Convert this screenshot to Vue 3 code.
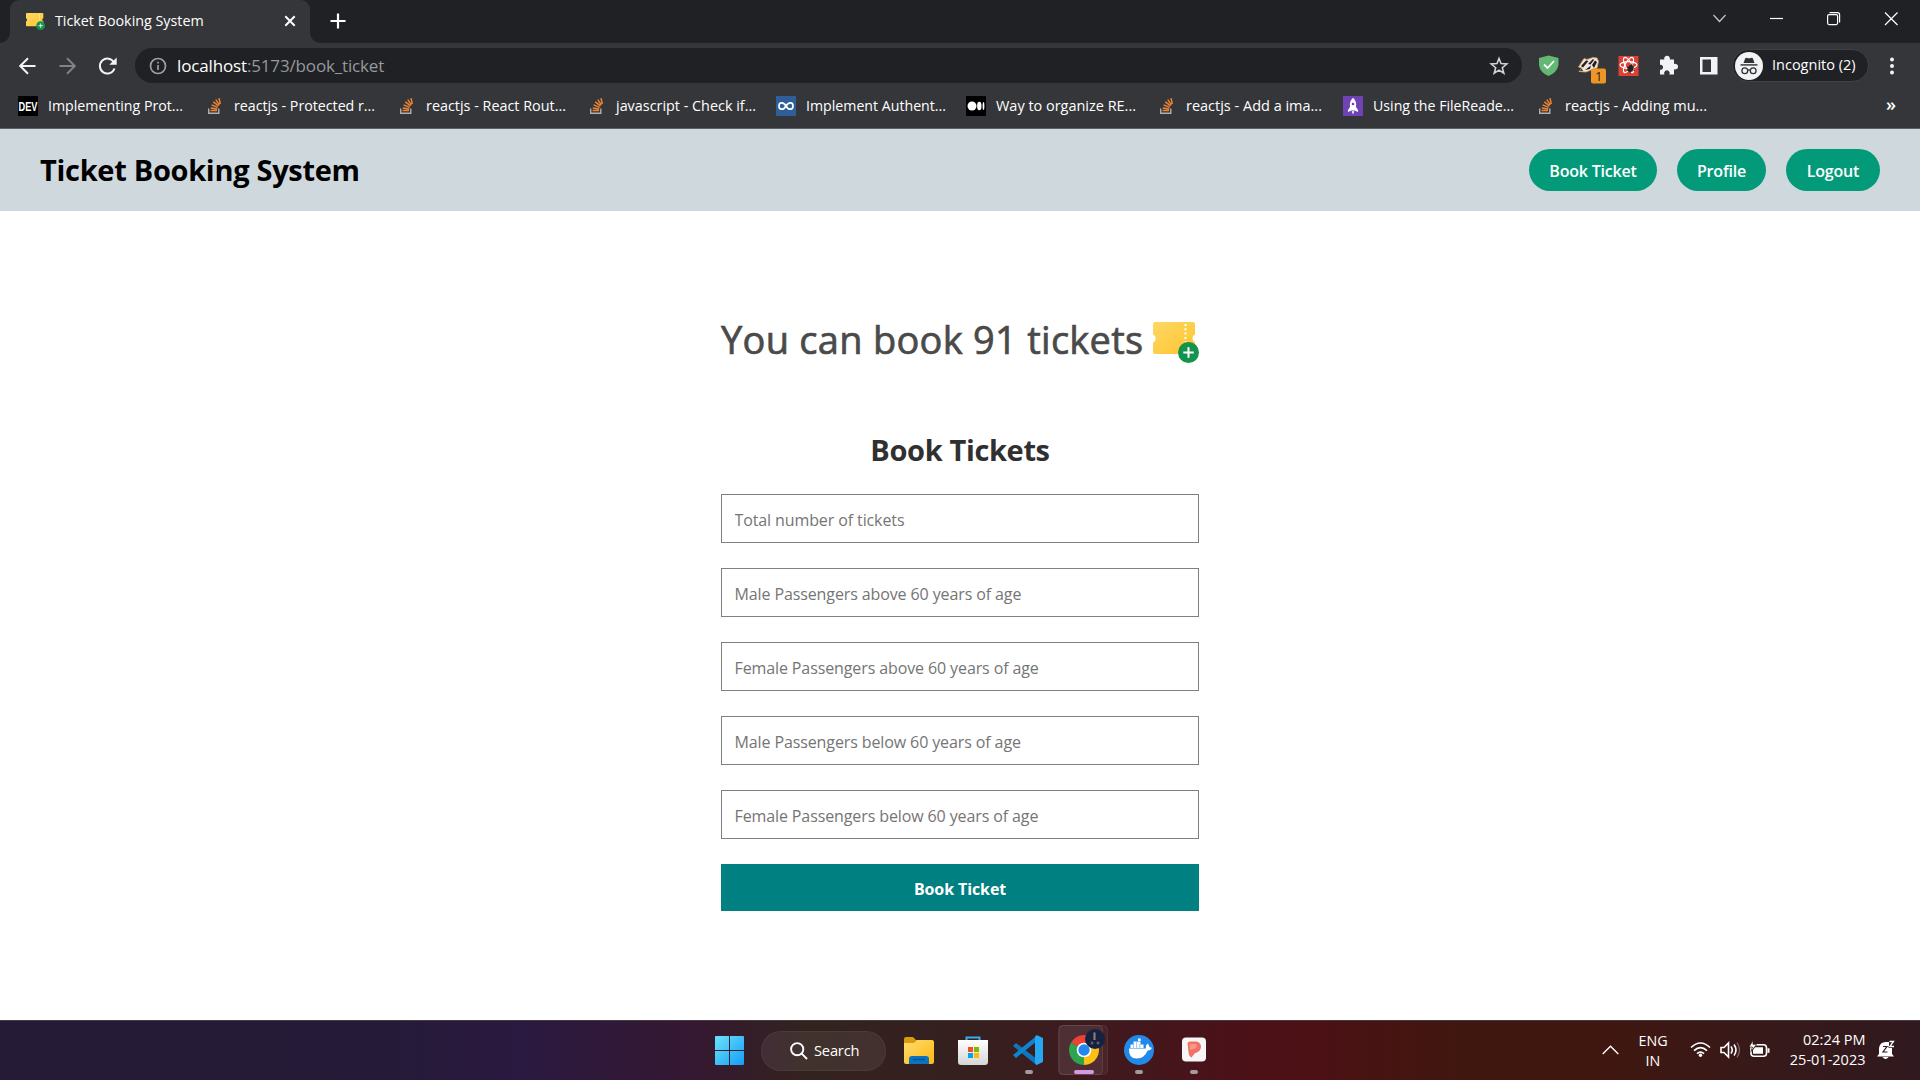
<script setup>
const bookmarks = [
  { icon: 'dev', text: 'Implementing Prot...', span: 188, w: 135 },
  { icon: 'so', text: 'reactjs - Protected r...', span: 192, w: 141 },
  { icon: 'so', text: 'reactjs - React Rout...', span: 190, w: 140 },
  { icon: 'so', text: 'javascript - Check if...', span: 188, w: 140 },
  { icon: 'loop', text: 'Implement Authent...', span: 190, w: 140 },
  { icon: 'medium', text: 'Way to organize RE...', span: 192, w: 140 },
  { icon: 'so', text: 'reactjs - Add a ima...', span: 185, w: 136 },
  { icon: 'rocket', text: 'Using the FileReade...', span: 194, w: 141 },
  { icon: 'so', text: 'reactjs - Adding mu...', span: 201, w: 142 },
]
const fields = [
  'Total number of tickets',
  'Male Passengers above 60 years of age',
  'Female Passengers above 60 years of age',
  'Male Passengers below 60 years of age',
  'Female Passengers below 60 years of age',
]
</script>

<template>
  <div class="screen">
    <svg width="0" height="0" class="defs">
      <defs>
        <linearGradient id="gold" x1="0" y1="0" x2="1" y2="1">
          <stop offset="0" stop-color="#fed766" /><stop offset="1" stop-color="#ffc52e" />
        </linearGradient>
        <linearGradient id="win" x1="0" y1="0" x2="1" y2="1">
          <stop offset="0" stop-color="#6be3fc" /><stop offset="1" stop-color="#149df5" />
        </linearGradient>
        <linearGradient id="folder" x1="0" y1="0" x2="1" y2="1">
          <stop offset="0" stop-color="#ffdc70" /><stop offset="1" stop-color="#fcb911" />
        </linearGradient>
        <linearGradient id="bag" x1="0" y1="0" x2="0" y2="1">
          <stop offset="0" stop-color="#fff" /><stop offset="1" stop-color="#d5d5d5" />
        </linearGradient>
        <symbol id="ticket" viewBox="0 0 46 41">
          <path fill="url(#gold)" d="M2 0H40Q42 0 42 2V12.500A4 4 0 0 0 42 20V30Q42 32 40 32H2Q0 32 0 30V20.500A4.300 4.300 0 0 0 0 12.500V2Q0 0 2 0Z" />
          <path stroke="#fff" stroke-width="2" stroke-dasharray="2 2.300" d="M32.500 2V20" />
          <circle cx="35.500" cy="30.500" r="10.500" fill="#14934f" />
          <path stroke="#fff" stroke-width="2" d="M30.300 30.500H40.700M35.500 25.300V35.700" />
        </symbol>
      </defs>
    </svg>

    <header class="tabs">
      <div class="tab">
        <svg class="fav" width="19" height="17"><use href="#ticket" /></svg>
        <span class="tab-title">Ticket Booking System</span>
        <svg width="12" height="12" viewBox="0 0 12 12"><path d="M1.300 1.300 10.700 10.700M10.700 1.300 1.300 10.700" stroke="#fff" stroke-width="2" /></svg>
      </div>
      <svg class="plus" width="16" height="16" viewBox="0 0 16 16"><path d="M8 .5V15.500M.5 8H15.500" stroke="#fff" stroke-width="2.200" /></svg>
      <svg class="winctl" width="190" height="20" viewBox="0 0 190 20" fill="none" stroke="#fff" stroke-width="1.200">
        <path d="M3.500 7 9.500 13.500 15.500 7" stroke="#c8c9ca" />
        <path d="M60 10.500H73" />
        <rect x="117.600" y="6.600" width="10" height="10" rx="1.500" />
        <path d="M119.500 4.600H127.500Q129.600 4.600 129.600 6.700V14.500" />
        <path d="M175 4.500 187.500 17M187.500 4.500 175 17" />
      </svg>
    </header>

    <div class="toolbar">
      <svg class="nav" width="120" height="24" viewBox="0 0 120 24" fill="none" stroke="#f1f3f4" stroke-width="2">
        <path d="M17.500 12H2.500M10 4.200 2.200 12 10 19.800" />
        <path stroke="#808286" d="M41.500 12H56.500M49 4.200 56.800 12 49 19.800" />
        <path d="M96 8.500A7.500 7.500 0 1 0 96.500 14.500" />
        <path fill="#f1f3f4" stroke="none" d="M98.700 3.500V10.800H91.300Z" />
      </svg>
      <div class="omnibox">
        <svg width="18" height="18" viewBox="0 0 18 18" fill="none" stroke="#9aa0a6" stroke-width="1.700"><circle cx="9" cy="9" r="7.500" /><path d="M9 8V13M9 4.800V6.600" /></svg>
        <span class="url">localhost<i>:5173/book_ticket</i></span>
        <svg class="star" width="18" height="18" viewBox="0 0 18 18"><path d="M9 1.500 11 6.600 16.800 7 12.300 10.700 13.800 16.200 9 13.100 4.200 16.200 5.700 10.700 1.200 7 7 6.600Z" fill="none" stroke="#d0d3d6" stroke-width="1.600" /></svg>
      </div>
      <svg class="exts" width="190" height="36" viewBox="0 0 190 36">
        <path d="M13.500 7.500 23.500 10V17Q22 24.500 13.500 28Q5 24.500 4 17V10Z" fill="#64b875" />
        <path d="M9 16.500 12.500 20 19 13" stroke="#fff" stroke-width="1.800" fill="none" />
        <g>
          <path d="M43.500 19 49 10.500 52 11.500 58 9.500 62 10 63.500 13.500 62 20 56 22 51 24 44 23.500 47 20Z" fill="#eee5dc" stroke="#e6a059" stroke-width=".8" />
          <path d="M46 18 51 12.500 53.500 13 48 19.500ZM57 17 60 12.500 62 14 59 20ZM50 22 56 17.500 55 21ZM53 16 58 11 59 12 55.500 16.500ZM44 22.500 47 21 48 23Z" fill="#1e2025" />
          <rect x="56" y="20.500" width="15" height="15" rx="2" fill="#ed9526" />
          <text x="60" y="33" class="badge">1</text>
        </g>
        <rect x="83.500" y="8" width="20" height="20" fill="#dd4135" />
        <g fill="none" stroke="#fff" stroke-width="1.200">
          <ellipse cx="93.500" cy="17" rx="8.500" ry="3.300" />
          <ellipse cx="93.500" cy="17" rx="8.500" ry="3.300" transform="rotate(60 93.500 17)" />
          <ellipse cx="93.500" cy="17" rx="8.500" ry="3.300" transform="rotate(120 93.500 17)" />
        </g>
        <ellipse cx="95.500" cy="20.500" rx="2.800" ry="3.800" fill="#222" transform="rotate(35 95.500 20.500)" />
        <path d="M91.500 19 99.500 22.500M92.500 22.500 98.500 18M97 15.500 95 25.500" stroke="#222" />
        <path d="M125 11.500H129.300A2.900 2.900 0 1 1 134.800 11.500H139V16A2.900 2.900 0 1 1 139 21.300V26.500H134.300A2.800 2.800 0 1 0 129.500 26.500H125V21.800A2.600 2.600 0 1 0 125 16.700Z" fill="#f1f3f4" />
        <path fill-rule="evenodd" d="M165 9H182.500V26.500H165ZM167.500 11.500V24H176V11.500Z" fill="#f1f3f4" />
      </svg>
      <div class="incog">
        <svg width="28" height="28" viewBox="0 0 28 28">
          <circle cx="14" cy="14" r="14" fill="#f1f3f4" />
          <path d="M8.500 11 10.200 6.500Q10.500 5.300 12 5.900Q14 6.700 16 5.900Q17.500 5.300 17.900 6.500L19.500 11Z" fill="#303134" />
          <path d="M5.500 12.900H22.500" stroke="#303134" stroke-width="1.400" />
          <g fill="none" stroke="#303134" stroke-width="1.300"><circle cx="9.800" cy="18.800" r="2.900" /><circle cx="18.200" cy="18.800" r="2.900" /><path d="M12.700 18.200Q14 17.500 15.300 18.200" /></g>
        </svg>
        <span>Incognito (2)</span>
      </div>
      <svg class="more" width="6" height="20" viewBox="0 0 6 20" fill="#f1f3f4"><circle cx="3" cy="3.500" r="2" /><circle cx="3" cy="10" r="2" /><circle cx="3" cy="16.500" r="2" /></svg>
    </div>

    <nav class="bookmarks">
      <div v-for="(b, i) in bookmarks" :key="i" class="bm" :class="b.icon" :style="{ width: b.span + 'px' }">
        <svg v-if="b.icon === 'dev'" width="20" height="20" viewBox="0 0 20 20"><rect width="20" height="20" /><text x=".5" y="14.500" textLength="19" lengthAdjust="spacingAndGlyphs" class="devmark">DEV</text></svg>
        <svg v-else-if="b.icon === 'so'" width="20" height="20" viewBox="0 0 20 20" fill="none">
          <path d="M2.700 12.500V17.200H12.800V12.500" stroke="#aeb0b4" stroke-width="1.400" />
          <path d="M4.600 14.500H11M4.800 11.900 11.200 12.900M5.600 8.900 11.700 11.400M7.300 5.900 12.500 9.900M9.800 3.600 13.300 8.900M13 2.200 14.300 8" stroke="#ef8430" stroke-width="1.500" />
        </svg>
        <svg v-else-if="b.icon === 'loop'" width="20" height="20" viewBox="0 0 20 20"><rect width="20" height="20" fill="#2f5f98" /><path d="M10 10C7.500 5.500 3 6 3 10S7.500 14.500 10 10S17 6 17 10S12.500 14.500 10 10Z" fill="none" stroke="#fff" stroke-width="1.700" /></svg>
        <svg v-else-if="b.icon === 'medium'" width="20" height="20" viewBox="0 0 20 20"><rect width="20" height="20" rx="1" /><g fill="#fff"><circle cx="6" cy="10" r="4.500" /><ellipse cx="13.300" cy="10" rx="2.200" ry="4.300" /><ellipse cx="17.500" cy="10" rx=".9" ry="4" /></g></svg>
        <svg v-else width="20" height="20" viewBox="0 0 20 20"><rect width="20" height="20" fill="#6f42b5" /><path d="M10 1.800Q14 5.500 13 11L15 14V16L11.500 14.500H8.500L5 16V14L7 11Q6 5.500 10 1.800ZM8.700 15.300H11.300L10 18.500Z" fill="#fff" /><circle cx="10" cy="8" r="1.300" fill="#6f42b5" /></svg>
        <svg class="bmt" :width="b.w" height="22"><text x="0" y="14.700" :textLength="b.w" lengthAdjust="spacingAndGlyphs">{{ b.text }}</text></svg>
      </div>
      <span class="chev">»</span>
    </nav>

    <div class="appbar">
      <h1>Ticket Booking System</h1>
      <div class="links">
        <button class="l1">Book Ticket</button>
        <button class="l2">Profile</button>
        <button class="l3">Logout</button>
      </div>
    </div>

    <main>
      <div class="headline">
        <span>You can book 91 tickets</span>
        <svg width="46" height="41"><use href="#ticket" /></svg>
      </div>
      <form @submit.prevent>
        <h2>Book Tickets</h2>
        <input v-for="f in fields" :key="f" :placeholder="f" />
        <button class="submit">Book Ticket</button>
      </form>
    </main>

    <footer class="taskbar">
      <svg class="start" width="29" height="29" viewBox="0 0 29 29"><path fill="url(#win)" d="M1 0H14V14H0V1Q0 0 1 0ZM15 0H28Q29 0 29 1V14H15ZM0 15H14V29H1Q0 29 0 28ZM15 15H29V28Q29 29 28 29H15Z" /></svg>
      <div class="search">
        <svg width="18" height="18" viewBox="0 0 18 18" fill="none" stroke="#fff" stroke-width="1.900"><circle cx="7.200" cy="7.200" r="6.100" /><path d="M11.700 11.700 17 17" /></svg>
        <span>Search</span>
      </div>
      <svg class="apps" width="320" height="60" viewBox="0 0 320 60">
        <path d="M3 19Q3 17 5 17H12L15 20H31V28H3Z" fill="#d99b0b" />
        <path d="M3 23H13L16 20H31Q33 20 33 22V42Q33 44 31 44H5Q3 44 3 42Z" fill="url(#folder)" />
        <path d="M8 44V39Q8 36 11 36H25Q28 36 28 39V44Z" fill="#0b72bd" /><path d="M12 39.500H24" stroke="#064e8e" stroke-width="1.300" />
        <path d="M65.500 22V17.500H78.500V22" fill="none" stroke="#31aef0" stroke-width="2" />
        <path d="M57 20H87V42Q87 45 84 45H60Q57 45 57 42Z" fill="url(#bag)" />
        <path d="M67 27H72V32H67Z" fill="#f25022" /><path d="M73 27H78V32H73Z" fill="#7fba00" /><path d="M67 33H72V38H67Z" fill="#00a4ef" /><path d="M73 33H78V38H73Z" fill="#ffb900" />
        <path d="M112 26 115 23 136 39V45.500Z" fill="#0f76bd" />
        <path d="M112 35 115 38 136 21V15.500Z" fill="#0b85d0" />
        <path d="M135.500 15 142 18V42L135.500 45 134 43V17Z" fill="#25a8f2" />
        <rect x="158.500" y="5.500" width="48" height="49" rx="4" fill="#ffffff0c" stroke="#ffffff14" />
        <rect x="157.500" y="5.500" width="44" height="49" rx="4" fill="#ffffff0c" stroke="#ffffff18" />
        <path d="M183 30 170.010 22.500A15 15 0 0 1 195.990 22.500Z" fill="#ea4335" />
        <path d="M183 30 195.990 22.500A15 15 0 0 1 183 45Z" fill="#fbc116" />
        <path d="M183 30V45A15 15 0 0 1 170.010 22.500Z" fill="#2da44e" />
        <path d="M183 45 189.500 33.750 183 30Z" fill="#fbc116" />
        <circle cx="183" cy="30" r="7.300" fill="#fff" /><circle cx="183" cy="30" r="5.700" fill="#2387f1" />
        <circle cx="194" cy="19" r="10" fill="#14223f" /><path d="M193.500 12.500V20" stroke="#9e7e72" stroke-width="2" /><circle cx="191" cy="23" r="1.500" fill="#695969" /><circle cx="197" cy="23" r="1.500" fill="#695969" />
        <circle cx="238" cy="30" r="15" fill="#2189ea" />
        <path d="M228 28.500H245Q244.500 25 246.500 23.500Q248.500 25 248.500 27.300Q250 27 251 28Q249.500 30.800 246.500 30.800Q243.500 38.500 235.500 38.500Q227.500 38.500 228 28.500Z" fill="#fff" />
        <path d="M229.500 24.500H242.500V28H229.500ZM232.500 21.500H239.500V24.500H232.500ZM237 18.500H239.700V21H237Z" fill="#fff" />
        <path d="M232.600 24V28M235.600 21V28M238.900 24V28" stroke="#6ab1ef" stroke-width=".7" />
        <rect x="281" y="17.500" width="24" height="24" rx="4" fill="#f7f6f6" />
        <path d="M286.500 23Q287 21.500 289 21.500H295Q300 22 300 27Q299.500 32 294 33L290.500 37.500Q288 36.500 287.500 32Z" fill="#ef7264" />
        <path d="M288.500 24H295Q297 26 294 28.500L289 30Z" fill="#fa9787" />
        <rect x="124" y="50" width="8" height="4" rx="2" fill="#a39a9b" /><rect x="173" y="50" width="20" height="4" rx="2" fill="#d69ae4" /><rect x="234" y="50" width="8" height="4" rx="2" fill="#a39a9b" /><rect x="289" y="50" width="8" height="4" rx="2" fill="#a39a9b" />
      </svg>
      <svg class="up" width="17" height="10" viewBox="0 0 17 10"><path d="M.7 9 8.500 1.300 16.300 9" fill="none" stroke="#fff" stroke-width="1.400" /></svg>
      <div class="lang"><span>ENG</span><span>IN</span></div>
      <svg class="status" width="82" height="20" viewBox="0 0 82 20" fill="none" stroke="#fff" stroke-width="1.600">
        <path d="M1 7.500Q10.500-1.500 20 7.500M4 10.700Q10.500 4.500 17 10.700M7 13.700Q10.500 10.400 14 13.700" /><circle cx="10.500" cy="15.300" r="1.700" fill="#fff" stroke="none" />
        <path d="M31 7.500H34L38.500 3V17L34 12.500H31Z" /><path d="M41 6.500Q43.500 10 41 13.500M44 4.500Q48 10 44 15.500" /><path d="M47 2.500Q52 10 47 17.500" stroke="#806c6c" stroke-width="1.200" />
        <rect x="61" y="4.800" width="15.500" height="11.500" rx="3" /><path d="M65 7.300H73V13.800H63V10Z" fill="#fff" stroke="none" /><path d="M78.500 8.300V12.800" stroke-width="2" /><path d="M63 .5 59 7H62.500L61 11.500 66.500 4.500H63Z" fill="#fff" stroke="#391b19" stroke-width=".7" />
      </svg>
      <div class="clock"><span>02:24 PM</span><span>25-01-2023</span></div>
      <svg class="bell" width="18" height="20" viewBox="0 0 18 20"><path d="M2 14V8Q3 1.500 9.500 2H12V8H15V14L17 16.500H0ZM5.500 17H11.500Q8.500 21 5.500 17Z" fill="#fff" /><path d="M6 6.500H10L6 12H10.500" fill="none" stroke="#2e1b1e" stroke-width="1.200" /><path d="M12.500 1.500H16.500L12.800 6.500H17" stroke="#2e1b1e" stroke-width="2" fill="none" /><path d="M12.500 1.500H16.500L12.800 6.500H17" stroke="#fff" stroke-width="1.300" fill="none" /></svg>
    </footer>
  </div>
</template>

<style>
body { margin: 0; overflow: hidden; background: #fff; }
</style>

<style scoped>
* { box-sizing: border-box; }
.screen { width: 1920px; height: 1080px; display: flex; flex-direction: column; font-family: "Open Sans", "Noto Sans", sans-serif; overflow: hidden; }
.defs { position: absolute; }
svg { display: block; flex: none; overflow: visible; }
span, button { white-space: nowrap; }
.tabs { height: 43px; background: #202124; display: flex; align-items: flex-start; flex: none; padding-left: 10px; }
.tab { position: relative; width: 300px; height: 43px; background: #35363a; border-radius: 9px 9px 0 0; display: flex; align-items: center; padding: 0 14px 1px 16px; color: #fff; font-size: 14.300px; }
.tab::before, .tab::after { content: ""; position: absolute; bottom: 0; width: 10px; height: 10px; }
.tab::before { left: -10px; background: radial-gradient(circle at 0 0, transparent 9.500px, #35363a 10px); }
.tab::after { right: -10px; background: radial-gradient(circle at 100% 0, transparent 9.500px, #35363a 10px); }
.tab-title { flex: 1; margin-left: 10px; padding-bottom: 2px; letter-spacing: 0; }
.plus { margin: 13px 0 0 19.500px; }
.winctl { margin: 8px 20px 0 auto; }
.toolbar { height: 45px; background: #35363a; display: flex; align-items: center; flex: none; }
.nav { margin: 0 -3px 0 18px; }
.omnibox { width: 1387px; height: 35px; border-radius: 18px; background: #202124; display: flex; align-items: center; padding: 0 14px; color: #fff; }
.url { margin-left: 10px; font-size: 17px; letter-spacing: -.15px; }
.url i { font-style: normal; color: #96999d; }
.star { margin-left: auto; }
.exts { margin-left: 13px; }
.badge { font: 13px "Open Sans", sans-serif; fill: #222; }
.incog { width: 137px; height: 33px; border-radius: 17px; background: #202124; margin-left: 7px; display: flex; align-items: center; padding-left: 2px; color: #fff; font-size: 14.500px; border: 1px solid #414246; }
.incog span { margin-left: 9px; padding-bottom: 2px; letter-spacing: 0; }
.more { margin-left: 20px; }
.bookmarks { height: 41px; background: #35363a; border-bottom: 1px solid #5f6062; display: flex; padding: 8px 0 0 18px; flex: none; }
.bm { display: flex; gap: 10px; flex: none; }
.bm.so { gap: 8px; }
.bmt { fill: #fff; font-size: 14.500px; }
.devmark { font: bold 12px "Liberation Sans", sans-serif; fill: #fff; }
.chev { color: #fff; font-size: 18px; line-height: 17px; margin-left: 148px; font-weight: 600; }
.appbar { height: 82px; background: #cfd8dd; display: flex; justify-content: space-between; align-items: center; padding: 0 40px; flex: none; }
h1 { margin: 0; padding-bottom: 2px; font-size: 29px; font-weight: 700; color: #000; letter-spacing: -.3px; }
.links { display: flex; gap: 20px; }
.links button { height: 42px; border: 0; border-radius: 21px; background: #039a7a; color: #fff; font: 600 16px "Open Sans", sans-serif; padding: 1px 0 0; letter-spacing: -.2px; }
.l1 { width: 128px; } .l2 { width: 89px; } .l3 { width: 94px; }
main { flex: 1; display: flex; flex-direction: column; align-items: center; background: #fff; }
.headline { width: 478px; margin-top: 96px; height: 64px; display: flex; align-items: center; justify-content: space-between; color: #4a4a4a; font-size: 38px; letter-spacing: .27px; -webkit-text-stroke: .7px #4a4a4a; }
.headline svg { margin-top: 6px; }
form { width: 478px; display: flex; flex-direction: column; }
h2 { margin: 59px 0 24px; height: 40px; line-height: 40px; text-align: center; font-size: 29px; letter-spacing: -.35px; color: #303030; }
input { width: 478px; height: 49px; border: 1px solid #808080; padding: 2px 12px 0 12.500px; margin: 0 0 25px; outline: 0; font: 16px "Open Sans", sans-serif; letter-spacing: -.11px; }
input::placeholder { color: #757575; opacity: 1; }
.submit { height: 47px; border: 0; background: #008080; color: #fff; font: 700 16px "Open Sans", sans-serif; letter-spacing: -.1px; padding: 2px 0 0; }
.taskbar { height: 60px; flex: none; display: flex; align-items: center; border-top: 1px solid #453c3d; color: #fff; background: linear-gradient(90deg, #251b36 0, #251b38 20%, #2a1940 27%, #351832 36%, #33231f 42%, #35201f 50%, #40191f 58%, #4b1118 64%, #4b1114 69%, #40170f 76%, #40170f 83%, #37191a 92%, #30191f 100%); }
.start { margin-left: 715px; }
.search { width: 125px; height: 40px; border-radius: 20px; margin-left: 17px; background: #ffffff12; border: 1px solid #ffffff0c; display: flex; align-items: center; padding-left: 28px; font-size: 14.700px; }
.search span { margin-left: 6px; padding-bottom: 2px; letter-spacing: -.2px; }
.apps { margin-left: 15px; margin-top: -1px; }
.up { margin-left: 381px; margin-top: -2px; }
.lang { margin-left: 16px; width: 36px; text-align: center; display: flex; flex-direction: column; font-size: 14.300px; line-height: 20px; margin-top: 0; }
.status { margin-left: 18.500px; margin-top: -1px; }
.clock { width: 80px; margin-left: 14px; display: flex; flex-direction: column; align-items: flex-end; font-size: 14.500px; line-height: 20px; margin-top: -2px; }
.bell { margin-left: 11px; margin-top: -1px; }
</style>
